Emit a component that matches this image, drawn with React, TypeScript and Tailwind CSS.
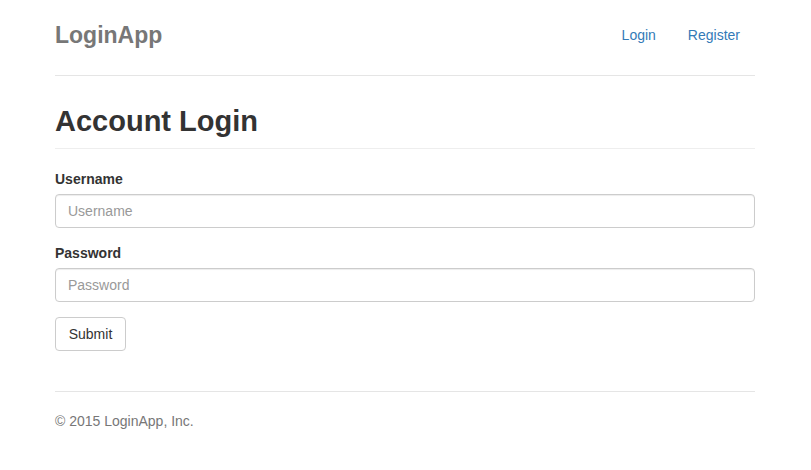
export default function App() {
  return (
    <div className="min-h-[470px] bg-white pt-[15px] text-[14px] leading-[20px] text-[#333]" style={{ fontFamily: '"Liberation Sans", Arial, sans-serif' }}>
      <div className="ml-[55px] w-[700px]">
        <header className="flex items-center justify-between border-b border-[#e5e5e5] pb-[20px]">
          <h3 className="m-0 text-[23px] font-bold leading-[40px] text-[#777]">LoginApp</h3>
          <nav className="flex gap-[2px]">
            <a href="#" className="block px-[15px] py-[10px] text-[14px] leading-[20px] text-[#337ab7]">Login</a>
            <a href="#" className="block px-[15px] py-[10px] text-[14px] leading-[20px] text-[#337ab7]">Register</a>
          </nav>
        </header>

        <div className="mt-[29px] border-b border-[#eee] pb-[10px]">
          <h2 className="text-[29px] font-bold leading-[33px] text-[#333]">Account Login</h2>
        </div>

        <form className="mt-[20px] flex flex-col gap-[15px]">
          <div className="flex flex-col">
            <label className="mb-[5px] font-bold leading-[20px]">Username</label>
            <input
              type="text"
              placeholder="Username"
              className="h-[34px] w-full rounded-[4px] border border-[#ccc] bg-white px-[12px] py-[6px] text-[14px] text-[#555] shadow-[inset_0_1px_1px_rgba(0,0,0,0.075)] outline-none placeholder:text-[#999]"
            />
          </div>
          <div className="flex flex-col">
            <label className="mb-[5px] font-bold leading-[20px]">Password</label>
            <input
              type="password"
              placeholder="Password"
              className="h-[34px] w-full rounded-[4px] border border-[#ccc] bg-white px-[12px] py-[6px] text-[14px] text-[#555] shadow-[inset_0_1px_1px_rgba(0,0,0,0.075)] outline-none placeholder:text-[#999]"
            />
          </div>
          <div>
            <button type="button" className="h-[34px] w-[71px] rounded-[4px] border border-[#ccc] bg-white text-[14px] text-[#333]">Submit</button>
          </div>
        </form>

        <footer className="mt-[40px] border-t border-[#e5e5e5] pt-[19px]">
          <p className="leading-[20px] text-[#777]">© 2015 LoginApp, Inc.</p>
        </footer>
      </div>
    </div>
  );
}
